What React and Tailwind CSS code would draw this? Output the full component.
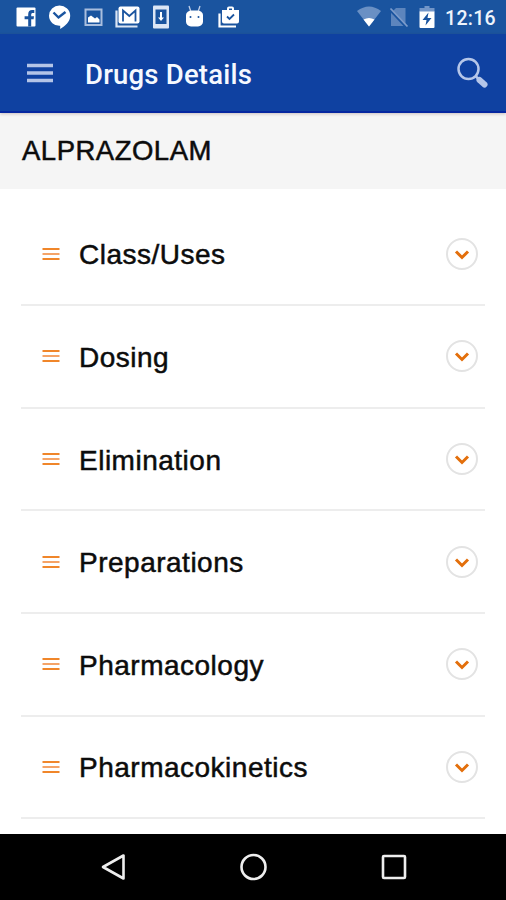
const SECTIONS = [
  "Class/Uses",
  "Dosing",
  "Elimination",
  "Preparations",
  "Pharmacology",
  "Pharmacokinetics",
];

function NotificationIcons() {
  return (
    <svg width="226" height="24" viewBox="0 0 226 24" fill="none">
      {/* facebook */}
      <rect x="0.5" y="2.5" width="19" height="19" rx="1" fill="#fff" />
      <path d="M12.2 21.5v-7.3H8.6v-3h3.6V9.3c0-2.8 1.400-4.300 3.900-4.300h2.200v3h-1.400c-1.200 0-1.700.5-1.700 1.500v1.700h2.800l-.4 3h-2.400v7.300z" fill="#1a549f" />
      {/* check bubble */}
      <path d="M43.5 0.5a10.7 10.3 0 0 1 10.7 10.3c0 6-5 10-10 13.2v-3.2A10.5 10.2 0 0 1 33 10.8 10.6 10.3 0 0 1 43.5.5z" fill="#fff" />
      <path d="M37.5 7.5l5 5 7-5.5" stroke="#1a549f" strokeWidth="2.4" />
      {/* picture */}
      <rect x="69.5" y="4.5" width="16" height="15.5" stroke="#a9bede" strokeWidth="2" />
      <path d="M72 17.5v-5l3-2 4 3 2-1.5 2.5 2.5v3z" fill="#fff" />
      {/* gmail */}
      <path d="M100.5 5.5v16h21" stroke="#dbe5f4" strokeWidth="2.2" />
      <rect x="102.5" y="1.5" width="21" height="17" rx="2" fill="#fff" />
      <path d="M107 16.5V5.5l6.3 5.5 6.2-5.5v11" stroke="#1a549f" strokeWidth="1.8" />
      {/* download */}
      <rect x="137" y="0.5" width="16" height="23" rx="1" fill="#dce6f5" />
      <rect x="139.5" y="4.5" width="11" height="14.5" fill="#1a549f" />
      <path d="M144 7h2v5.5h2L145 16l-3-3.5h2z" fill="#fff" />
      {/* android head */}
      <path d="M173 1l2 6M184 1l-2 6" stroke="#c2d1ea" strokeWidth="1.3" />
      <path d="M170 10a6 4.5 0 0 1 6-4.5h5a6 4.5 0 0 1 6 4.5v6.500a5 5 0 0 1-5 5h-7a5 5 0 0 1-5-5z" fill="#fff" />
      <circle cx="174.5" cy="12" r="1" fill="#1a549f" />
      <circle cx="182.5" cy="12" r="1" fill="#1a549f" />
      {/* shopping bag check */}
      <path d="M203.5 8.500v13H220" stroke="#fff" strokeWidth="2.2" />
      <path d="M206 5h5V3.500a2 2 0 0 1 2-2h3a2 2 0 0 1 2 2V5h5v11.500a2 2 0 0 1-2 2h-13a2 2 0 0 1-2-2zM213 3.500V5h3V3.500z" fill="#fff" />
      <path d="M211 11.500l2.500 2.500 4.500-4.500" stroke="#1a549f" strokeWidth="1.8" />
    </svg>
  );
}

function SystemIcons() {
  return (
    <svg width="80" height="24" viewBox="0 0 80 24" fill="none">
      <path d="M0 6Q12-3 24 6L12 21.5z" fill="#6a90c4" />
      <path d="M6.500 14.500q5.500-3 11 0L12 21.500z" fill="#fff" />
      <path d="M39 3h9.500v18H34V8z" fill="#5d85bd" />
      <path d="M32 3.500l17 18" stroke="#1a549f" strokeWidth="3" />
      <path d="M33.500 3.500l17 18" stroke="#7d9ccb" strokeWidth="1.8" />
      <path d="M67.500 1h5v2h5v4h-15V3h5z" fill="#7396c8" />
      <path d="M62.500 6.500h15V22a1 1 0 0 1-1 1h-13a1 1 0 0 1-1-1z" fill="#fff" />
      <path d="M71.500 7.500l-6 7.500h4l-1 5.500 6-7.500h-4z" fill="#1a549f" />
    </svg>
  );
}

function SectionRow({ title }) {
  return (
    <li className="flex h-[102.6px] items-center border-b-2 border-[#ededed] pl-[21px] pr-[7px]">
      <svg width="18" height="14" viewBox="0 0 18 14" stroke="#f0862a" strokeWidth="2">
        <path d="M0.5 2h17M0.5 12h17" />
        <path d="M0.5 7h17" stroke="#f5a468" />
      </svg>
      <span className="ml-[19px] flex-1 pt-[3px] text-[28px] leading-8 tracking-[0.5px] text-[#0c0c0c] [-webkit-text-stroke:0.5px_#0c0c0c]">
        {title}
      </span>
      <button className="flex size-8 items-center justify-center rounded-full border-2 border-[#e3e3e3]">
        <svg width="16" height="12" viewBox="0 0 16 12" fill="none">
          <path d="M2 3.500l6 6 6-6" stroke="#e36f0c" strokeWidth="3" />
        </svg>
      </button>
    </li>
  );
}

export default function App() {
  return (
    <div className="flex h-[900px] w-[506px] flex-col overflow-hidden bg-white font-['Liberation_Sans',sans-serif]">
      <div className="flex h-[34px] shrink-0 items-center bg-[#1a549f] pl-4 pr-[10px]">
        <NotificationIcons />
        <div className="ml-auto flex items-center gap-[8px]">
          <SystemIcons />
          <span className="pt-[3px] font-[Roboto,sans-serif] text-[19.5px] font-medium leading-6 tracking-[0.3px] text-[#eef4fc]">
            12:16
          </span>
        </div>
      </div>

      <header className="z-10 flex h-[79px] shrink-0 items-center border-b-2 border-[#0527a0] bg-[#0f41a1] pl-[27px] pr-4 shadow-[0_1px_3px_rgba(80,30,30,0.25)]">
        <svg width="26" height="20" viewBox="0 0 26 20" stroke="#b4c4e7" strokeWidth="3.5">
          <path d="M0 2.500h26M0 10h26M0 17.500h26" />
        </svg>
        <h1 className="ml-8 pt-1 font-[Roboto,sans-serif] text-[27.5px] font-medium leading-8 tracking-[0.2px] text-[#f6f9ff]">
          Drugs Details
        </h1>
        <svg className="ml-auto" width="34" height="34" viewBox="0 0 34 34" fill="none" stroke="#b5c6e9">
          <circle cx="12.500" cy="13" r="10" strokeWidth="2.5" />
          <path d="M19.500 20l3 3" strokeWidth="2.5" />
          <path d="M23.500 24l5 4.500" strokeWidth="6" strokeLinecap="round" />
        </svg>
      </header>

      <div className="flex h-[76px] shrink-0 items-center bg-[#f5f5f5] pl-[22px]">
        <h2 className="text-[27.5px] leading-8 tracking-[0.5px] text-[#0c0c0c] [-webkit-text-stroke:0.5px_#0c0c0c]">
          ALPRAZOLAM
        </h2>
      </div>

      <ul className="min-h-0 flex-1 overflow-hidden px-[21px] pt-[14.6px]">
        {SECTIONS.map((title) => (
          <SectionRow key={title} title={title} />
        ))}
      </ul>

      <nav className="flex h-[66.5px] shrink-0 items-center justify-between bg-black px-[99px]">
        <svg width="28" height="30" viewBox="0 0 28 30" fill="none" stroke="#eee" strokeWidth="2.6">
          <path d="M24.500 3.500v23L4 15z" strokeLinejoin="round" />
        </svg>
        <svg width="28" height="30" viewBox="0 0 28 30" fill="none" stroke="#eee" strokeWidth="2.6">
          <circle cx="14.500" cy="15" r="12" />
        </svg>
        <svg width="28" height="30" viewBox="0 0 28 30" fill="none" stroke="#eee" strokeWidth="2.6">
          <rect x="4" y="4" width="22" height="22" rx="1" />
        </svg>
      </nav>
    </div>
  );
}
